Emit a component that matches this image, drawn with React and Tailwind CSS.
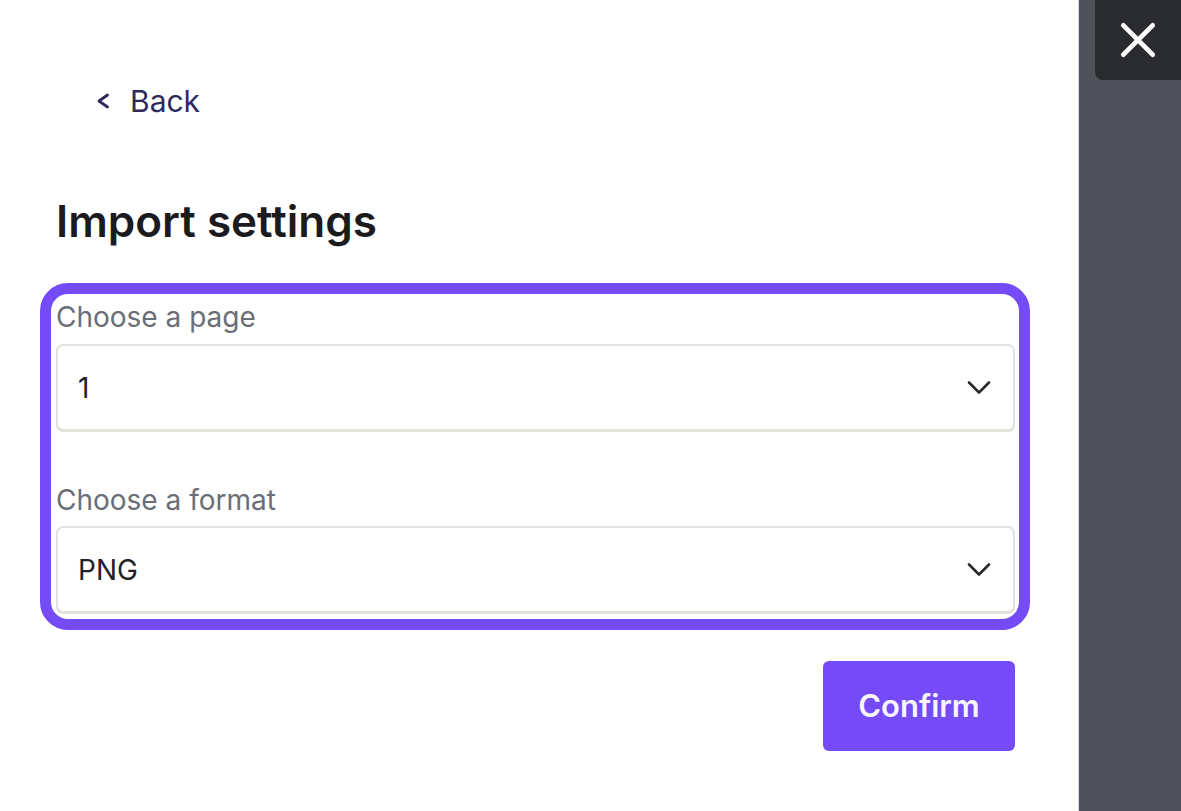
import React from "react";

function Chevron() {
  return (
    <svg viewBox="0 0 24 13" className="w-[24px] h-[13px] text-[#2a2b2e]" fill="none" stroke="currentColor" strokeWidth="2.6" strokeLinecap="round" strokeLinejoin="round">
      <path d="M2 1.5l10 10 10-10" />
    </svg>
  );
}

function Select({ value }) {
  return (
    <div className="h-[87px] w-full rounded-[7px] border-2 border-[#e2e1dc] bg-white flex items-center justify-between pl-[20px] pr-[22px] shadow-[0_1px_0_#e2e1dc]">
      <span className="text-[28px] leading-none text-[#222326]">{value}</span>
      <Chevron />
    </div>
  );
}

export default function App() {
  return (
    <div className="w-[1181px] h-[811px] flex bg-white overflow-hidden" style={{ fontFamily: "Inter, 'Noto Sans', sans-serif" }}>
      <div className="w-[1078px] h-full bg-white flex flex-col pl-[40px] pr-[48px]">
        <div className="flex items-center gap-[20px] pl-[56px] mt-[86px] h-[30px] text-[#2e2a5c]">
          <svg viewBox="0 0 14 16" className="w-[14px] h-[16px]" fill="none" stroke="currentColor" strokeWidth="2.8" strokeLinecap="round" strokeLinejoin="round">
            <path d="M11.5 2L3 8l8.5 6" />
          </svg>
          <span className="text-[30px] leading-none">Back</span>
        </div>
        <h1 className="mt-[83px] ml-[16px] text-[44px] font-semibold text-[#1b1b1f] leading-none">Import settings</h1>
        <div className="mt-[40px] h-[347px] rounded-[28px] border-[11px] border-[#744bf6] pl-[5px] pr-[4px] pt-[9px]">
          <div className="text-[28px] text-[#6a6e77] leading-none">Choose a page</div>
          <div className="mt-[13px]">
            <Select value="1" />
          </div>
          <div className="text-[28px] text-[#6a6e77] leading-none mt-[55px]">Choose a format</div>
          <div className="mt-[12px]">
            <Select value="PNG" />
          </div>
        </div>
        <div className="flex justify-end mt-[31px] pr-[15px]">
          <button className="w-[192px] h-[90px] rounded-[6px] bg-[#744bf6] text-[#f7f5ff] text-[31px] font-semibold">Confirm</button>
        </div>
      </div>
      <div className="flex-1 h-full bg-[#4f525b] border-l border-[#d8d8dc] flex justify-end items-start">
        <div className="w-[86px] h-[80px] bg-[#2a2b2f] rounded-bl-[8px] flex items-center justify-center">
          <svg viewBox="0 0 24 24" className="w-[44px] h-[44px]" fill="none" stroke="white" strokeWidth="2.6" strokeLinecap="round">
            <path d="M4 4l16 16M20 4L4 20" />
          </svg>
        </div>
      </div>
    </div>
  );
}
